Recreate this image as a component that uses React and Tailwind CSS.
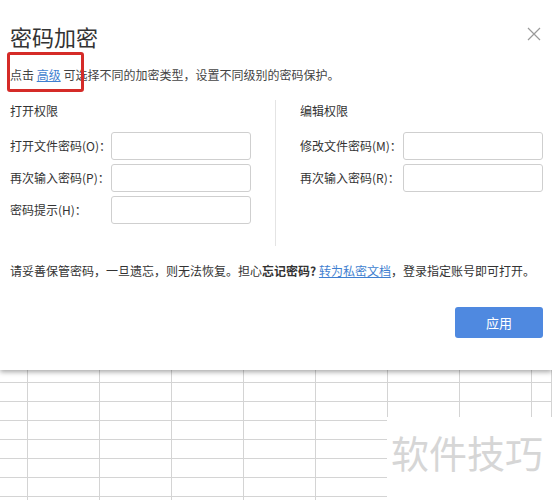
import React from "react";

const font = { fontFamily: '"Noto Sans CJK SC", "Noto Sans", sans-serif' };

function Field({ label, labelWidth }) {
  return (
    <div className="flex items-center h-[28px]">
      <span className={`${labelWidth} whitespace-nowrap text-[12px] text-[#333]`}>{label}</span>
      <div className="w-[140px] h-[28px] border border-[#cfcfcf] rounded-[3px] bg-white" />
    </div>
  );
}

function Sheet() {
  const rows = [13, 19, 19, 19, 19, 19, 19, 19];
  const cols = [28, 72, 72, 72, 72, 72, 72, 72, 20];
  return (
    <div className="relative h-[130px] overflow-hidden bg-white">
      <div className="flex flex-col">
        {rows.map((h, r) => (
          <div key={r} className="flex" style={{ height: h }}>
            {cols.map((w, c) => (
              <div
                key={c}
                className="shrink-0 border-r border-b border-[#d4d4d4]"
                style={{ width: w }}
              />
            ))}
          </div>
        ))}
      </div>
      {/* watermark */}
      <div className="absolute left-[387px] top-[47px] w-[170px] h-[90px] bg-white">
        <div className="mt-[13px] ml-[4px] text-[38px] leading-[44px] text-[#d6d6d6]">
          软件技巧
        </div>
      </div>
    </div>
  );
}

export default function App() {
  return (
    <div className="w-[552px] h-[500px] bg-white overflow-hidden" style={font}>
      <div className="relative z-10 h-[370px] bg-white shadow-[0_2px_5px_rgba(0,0,0,0.35)]">
        {/* close */}
        <svg
          className="absolute left-[527px] top-[27px]"
          width="14"
          height="14"
          viewBox="0 0 14 14"
        >
          <path d="M1 1L13 13M13 1L1 13" stroke="#9a9a9a" strokeWidth="1.2" fill="none" />
        </svg>

        {/* highlight box */}
        <div className="absolute left-[7px] top-[52px] w-[77px] h-[40px] border-[3px] border-[#d52b28] rounded-[3px]" />

        <div className="pl-[10px] pt-[20px]">
          <h1 className="text-[22px] leading-[32px] text-[#333] font-normal">密码加密</h1>
          <p className="mt-[13px] text-[12px] leading-[20px] text-[#444]">
            点击 <span className="text-[#3f7fd0] underline">高级</span> 可选择不同的加密类型，设置不同级别的密码保护。
          </p>

          <div className="flex mt-[15px] h-[146px]">
            <div className="w-[241px]">
              <div className="text-[12px] leading-[20px] text-[#333] mt-[1px]">打开权限</div>
              <div className="flex flex-col gap-[4px] mt-[11px]">
                <Field label="打开文件密码(O)：" labelWidth="w-[101px]" />
                <Field label="再次输入密码(P)：" labelWidth="w-[101px]" />
                <Field label="密码提示(H)：" labelWidth="w-[101px]" />
              </div>
            </div>
            <div className="ml-[24px] w-px bg-[#e4e4e4]" />
            <div className="ml-[24px] w-[243px]">
              <div className="text-[12px] leading-[20px] text-[#333] mt-[1px]">编辑权限</div>
              <div className="flex flex-col gap-[4px] mt-[11px]">
                <Field label="修改文件密码(M)：" labelWidth="w-[103px]" />
                <Field label="再次输入密码(R)：" labelWidth="w-[103px]" />
              </div>
            </div>
          </div>

          <p className="mt-[15px] text-[12px] leading-[20px] text-[#333] whitespace-nowrap">
            请妥善保管密码，一旦遗忘，则无法恢复。担心<span className="font-bold">忘记密码?</span>{" "}
            <span className="text-[#3f7fd0] underline">转为私密文档</span>，登录指定账号即可打开。
          </p>

          <div className="flex justify-end pr-[9px] mt-[26px]">
            <button className="w-[88px] h-[31px] rounded-[3px] bg-[#4f89e0] text-white text-[13px]">
              应用
            </button>
          </div>
        </div>
      </div>
      <Sheet />
    </div>
  );
}
